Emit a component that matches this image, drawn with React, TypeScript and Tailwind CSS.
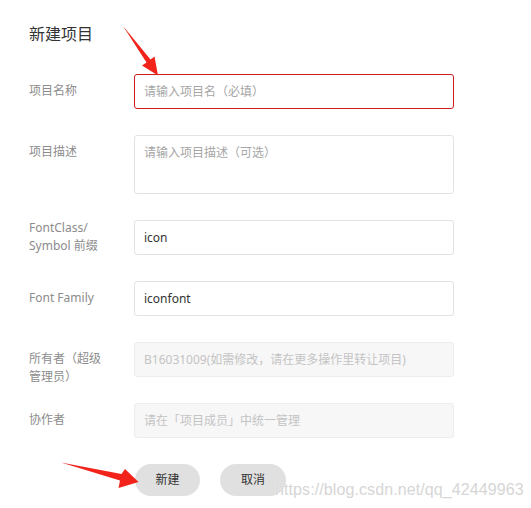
import React from "react";

const font = { fontFamily: '"Noto Sans", "Noto Sans CJK SC", sans-serif' };

function Row({ label, children, labelClass = "pt-[8px]" }: { label: React.ReactNode; children: React.ReactNode; labelClass?: string }) {
  return (
    <div className="flex items-start">
      <div className={`w-[105px] h-[35px] shrink-0 whitespace-nowrap text-[12px] leading-[18px] text-[#8c8c8c] ${labelClass}`}>{label}</div>
      {children}
    </div>
  );
}

function Box({ text, kind = "normal", tall = false }: { text: string; kind?: "normal" | "placeholder" | "disabled" | "error"; tall?: boolean }) {
  const border =
    kind === "error" ? "border-[#cf1d1d]" : kind === "disabled" ? "border-[#ececec] bg-[#f7f7f7]" : "border-[#e3e3e3] bg-white";
  const color =
    kind === "normal" ? "text-[#333]" : kind === "disabled" ? "text-[#c4c4c4]" : "text-[#a6a6a6]";
  return (
    <div
      className={`w-[320px] shrink-0 ${tall ? "h-[59px] items-start pt-[8px]" : "h-[35px] items-center"} flex rounded-[3px] border px-[9px] text-[12px] leading-[18px] ${border} ${color}`}
    >
      {text}
    </div>
  );
}

export default function App() {
  return (
    <div className="relative w-[531px] h-[508px] overflow-hidden bg-white" style={font}>
      <div className="pl-[29px] pt-[22px]">
        <div className="text-[16px] leading-[24px] text-[#333]">新建项目</div>
        <div className="mt-[28px] flex flex-col gap-[26px]">
          <Row label="项目名称">
            <Box text="请输入项目名（必填）" kind="error" />
          </Row>
          <Row label="项目描述">
            <Box text="请输入项目描述（可选）" kind="placeholder" tall />
          </Row>
          <Row label={<>FontClass/<br />Symbol 前缀</>} labelClass="pt-0 mt-[-1px]">
            <Box text="icon" />
          </Row>
          <Row label="Font Family">
            <Box text="iconfont" />
          </Row>
          <Row label={<>所有者（超级<br />管理员）</>}>
            <Box text="B16031009(如需修改，请在更多操作里转让项目)" kind="disabled" />
          </Row>
          <Row label="协作者">
            <Box text="请在「项目成员」中统一管理" kind="disabled" />
          </Row>
          <div className="ml-[106px] flex gap-[20px]">
            <button className="w-[65px] h-[32px] rounded-full bg-[#e0e0e0] text-[12px] text-[#333]">新建</button>
            <button className="w-[66px] h-[32px] rounded-full bg-[#e0e0e0] text-[12px] text-[#333]">取消</button>
          </div>
        </div>
      </div>

      <div
        className="absolute left-[275px] top-[479px] text-[16px] leading-[22px] text-[#d6d6d6] tracking-[0.1px]"
        style={{ fontFamily: '"Liberation Sans", Arial, sans-serif', textShadow: "0 0 1px #fff" }}
      >
        https://blog.csdn.net/qq_42449963
      </div>

      <svg className="absolute left-0 top-0 pointer-events-none" width="531" height="508" viewBox="0 0 531 508">
        <polygon points="123,26 150.5,59.5 154.5,56.5 158,75.5 142,65.5 146.5,62.5" fill="#f2231b" />
        <polygon points="61,462.5 121.5,474 125,469 138.5,482 118.5,488 120,480.5" fill="#f2231b" />
      </svg>
    </div>
  );
}
